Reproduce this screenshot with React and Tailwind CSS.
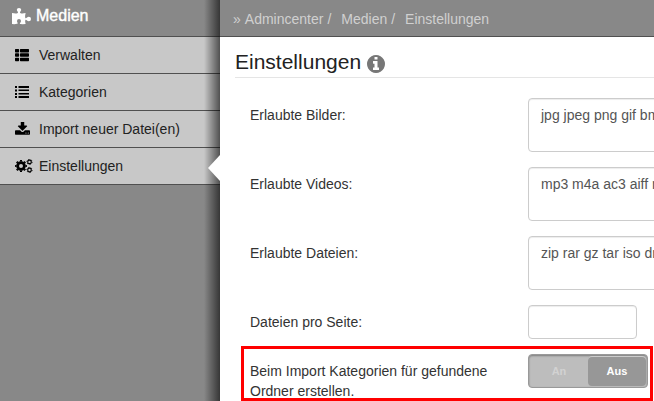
import { useState } from 'react'
import { FaThList } from 'react-icons/fa'

function PuzzleIcon() {
  return (
    <svg viewBox="0 0 20 18" className="h-[18px] w-5 shrink-0" fill="currentColor" aria-hidden="true">
      <path d="M0 6Q3.5 6.8 5.4 6.2C7.2 5.4 4.8 4.2 4.8 2.8Q4.8 1 7 1Q9.2 1 9.2 2.8C9.2 4.2 7 5.4 8.6 6.2Q10.5 6.8 13.6 6Q12.7 9.4 13.3 11C14.1 12.3 15 9.8 16.8 9.8Q19 9.8 19 12Q19 14.2 16.8 14.2C15 14.2 14.1 11.8 13.3 13.2Q12.9 14.5 13.6 17Q10.3 17.3 8.4 17C7 16.6 9 15.2 9 13.9Q9 12 7 12Q5 12 5 13.9C5 15.2 6.6 16.4 5 16.8Q3 17.4 0 17z" />
    </svg>
  )
}

function ListIcon() {
  return (
    <svg viewBox="0 0 14 14" className="h-3.5 w-3.5" fill="currentColor" aria-hidden="true">
      <path d="M0 1h2v2H0zM3.5 1H14v2H3.5zM0 4.5h2v2H0zM3.5 4.5H14v1.5H3.5zM0 8h2v2H0zM3.5 8H14v1.5H3.5zM0 11h2v2H0zM3.5 11H14v2H3.5z" />
    </svg>
  )
}

function DownloadIcon() {
  return (
    <svg viewBox="64 128 1664 1536" className="h-3.5 w-[15px]" fill="currentColor" aria-hidden="true">
      <path d="M1344 1344q0-26-19-45t-45-19-45 19-19 45 19 45 45 19 45-19 19-45zm256 0q0-26-19-45t-45-19-45 19-19 45 19 45 45 19 45-19 19-45zm128-224v320q0 40-28 68t-68 28h-1472q-40 0-68-28t-28-68v-320q0-40 28-68t68-28h465l135 136q58 56 136 56t136-56l136-136h464q40 0 68 28t28 68zm-325-569q17 41-14 70l-448 448q-18 19-45 19t-45-19l-448-448q-31-29-14-70 17-39 59-39h256v-448q0-26 19-45t45-19h256q26 0 45 19t19 45v448h256q42 0 59 39z" />
    </svg>
  )
}

// one big wheel and two small ones, the teeth are dashed circles
function CogsIcon() {
  return (
    <svg viewBox="0 0 18 14" className="h-3.5 w-[18px]" fill="none" stroke="currentColor" aria-hidden="true">
      <circle cx="6" cy="7" r="3.4" strokeWidth="2.8" />
      <circle cx="6" cy="7" r="5.2" strokeWidth="1.6" pathLength="16" strokeDasharray="1 1" strokeDashoffset="0.5" />
      <circle cx="14.5" cy="2.9" r="1.8" strokeWidth="1.2" />
      <circle cx="14.5" cy="2.9" r="2.6" strokeWidth="0.9" pathLength="12" strokeDasharray="1 1" />
      <circle cx="14.5" cy="11" r="1.8" strokeWidth="1.2" />
      <circle cx="14.5" cy="11" r="2.6" strokeWidth="0.9" pathLength="12" strokeDasharray="1 1" />
    </svg>
  )
}

function InfoIcon() {
  return (
    <svg viewBox="128 128 1536 1536" className="h-[18px] w-[18px] text-[#777]" fill="currentColor" aria-hidden="true">
      <path d="M1152 1376v-160q0-14-9-23t-23-9h-96v-512q0-14-9-23t-23-9h-320q-14 0-23 9t-9 23v160q0 14 9 23t23 9h96v320h-96q-14 0-23 9t-9 23v160q0 14 9 23t23 9h448q14 0 23-9t9-23zm-128-896v-160q0-14-9-23t-23-9h-192q-14 0-23 9t-9 23v160q0 14 9 23t23 9h192q14 0 23-9t9-23zm640 416q0 209-103 385.5t-279.5 279.5-385.5 103-385.5-103-279.5-279.5-103-385.5 103-385.5 279.5-279.5 385.5-103 385.5 103 279.5 279.5 103 385.5z" />
    </svg>
  )
}

const NAV = [
  { label: 'Verwalten', icon: <FaThList className="h-3.5 w-3.5" /> },
  { label: 'Kategorien', icon: <ListIcon /> },
  { label: 'Import neuer Datei(en)', icon: <DownloadIcon /> },
  { label: 'Einstellungen', icon: <CogsIcon /> },
]

const TYPES = [
  { id: 'bilder', label: 'Erlaubte Bilder:', value: 'jpg jpeg png gif bmp' },
  { id: 'videos', label: 'Erlaubte Videos:', value: 'mp3 m4a ac3 aiff mid' },
  { id: 'dateien', label: 'Erlaubte Dateien:', value: 'zip rar gz tar iso dmg' },
]

function Sidebar() {
  return (
    <aside className="relative w-[220px] shrink-0 bg-[#888]">
      <h2 className="flex h-9 items-center gap-1 pb-1 pl-3 text-base text-white">
        <PuzzleIcon />
        <span className="[-webkit-text-stroke:0.4px_white]">Medien</span>
      </h2>
      <nav className="border-t border-[#505050]">
        {NAV.map((n) => (
          <a
            key={n.label}
            href="#"
            className="flex h-[37px] items-center border-b border-[#505050] bg-[#c8c8c8] pl-[15px] text-[#222]"
          >
            <span className="flex w-6 shrink-0 items-center text-black">{n.icon}</span>
            {n.label}
          </a>
        ))}
      </nav>
      {/* shadow of the content area, with the marker of the active entry on top */}
      <div className="pointer-events-none absolute inset-y-0 right-0 w-4 bg-linear-to-r from-transparent to-black/60" />
      <svg viewBox="0 0 12 26" className="absolute top-[155px] right-0 h-[26px] w-3" aria-hidden="true">
        <path d="M12 0v26L0 13z" fill="#fff" />
      </svg>
    </aside>
  )
}

function Toggle({ value, onChange }) {
  return (
    <div
      role="radiogroup"
      aria-labelledby="import-label"
      className="flex h-[34px] w-[120px] shrink-0 rounded border border-[#999] bg-[#bdbdbd] p-px text-[11px] font-bold shadow-[inset_0_1px_2px_rgba(0,0,0,0.35)]"
    >
      {['An', 'Aus'].map((o) => (
        <label
          key={o}
          className={`relative flex flex-1 items-center justify-center rounded ${
            value === o ? 'bg-[#979797] text-white shadow-[inset_0_1px_0_#ccc]' : 'text-[#d2d2d2]'
          }`}
        >
          <input
            type="radio"
            name="import"
            className="sr-only"
            checked={value === o}
            onChange={() => onChange(o)}
          />
          {o}
        </label>
      ))}
    </div>
  )
}

export default function App() {
  const [create, setCreate] = useState('Aus')

  return (
    <div className="flex min-h-screen overflow-hidden bg-white font-['Liberation_Sans',Arial,sans-serif] text-sm leading-5 text-[#333]">
      <Sidebar />
      <main className="min-w-0 flex-1 overflow-hidden">
        <nav className="flex h-[37px] items-center border-b border-[#505050] bg-[#888] pt-0.5 pl-[13px] text-[#d0d0d0]">
          <span className="pr-1">»</span>
          <a href="#">Admincenter</a>
          <span className="pr-2.5 pl-1">/</span>
          <a href="#">Medien</a>
          <span className="pr-2.5 pl-1">/</span>
          <a href="#">Einstellungen</a>
        </nav>

        <h1 className="ml-[15px] flex h-[41px] items-center gap-1.5 border-b border-[#e5e5e5] pt-3.5 text-[21px] text-[#222]">
          <span className="pb-1">Einstellungen</span>
          <InfoIcon />
        </h1>

        <form className="pt-5">
          <div className="flex flex-col gap-[15px] pl-[30px]">
            {TYPES.map((t) => (
              <div key={t.id} className="flex items-start">
                <label htmlFor={t.id} className="w-[278px] shrink-0 pt-[7px]">
                  {t.label}
                </label>
                <textarea
                  id={t.id}
                  defaultValue={t.value}
                  className="h-[54px] min-w-[240px] flex-1 resize-none rounded border border-[#ccc] px-3 py-1.5 text-[#555] shadow-[inset_0_1px_1px_rgba(0,0,0,0.075)]"
                />
              </div>
            ))}
            <div className="flex items-start">
              <label htmlFor="pro-seite" className="w-[278px] shrink-0 pt-[7px]">
                Dateien pro Seite:
              </label>
              <input
                id="pro-seite"
                type="text"
                className="h-[34px] w-[109px] rounded border border-[#ccc] px-3 text-[#555] shadow-[inset_0_1px_1px_rgba(0,0,0,0.075)]"
              />
            </div>
          </div>

          <div className="mt-[7px] mr-px ml-[21px] flex h-[55px] items-start border-3 border-[#f00] pt-[5px] pl-1.5">
            <span id="import-label" className="w-[278px] shrink-0 pt-[7px] pr-[30px]">
              Beim Import Kategorien für gefundene Ordner erstellen.
            </span>
            <Toggle value={create} onChange={setCreate} />
          </div>
        </form>
      </main>
    </div>
  )
}
